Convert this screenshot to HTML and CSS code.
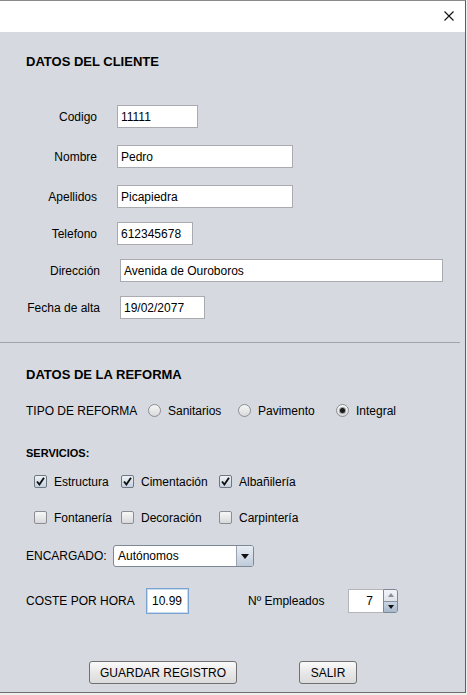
FILE: index.html
```html
<!DOCTYPE html>
<html lang="es">
<head>
<meta charset="utf-8">
<title>Datos del cliente</title>
<link rel="stylesheet" href="styles.css">
</head>
<body>
<div class="window">
  <div class="titlebar">
    <svg class="close" width="10" height="10" viewBox="0 0 10 10"><path d="M0.5 0.5 L9.5 9.5 M9.5 0.5 L0.5 9.5" stroke="#111" stroke-width="1.1" fill="none"/></svg>
  </div>
  <div class="panel">
    <section class="client">
      <h2 class="heading">DATOS DEL CLIENTE</h2>
      <div class="form">
        <div class="row"><span class="lbl">Codigo</span><span class="field w-codigo">11111</span></div>
        <div class="row gap17"><span class="lbl">Nombre</span><span class="field w-nombre">Pedro</span></div>
        <div class="row gap17"><span class="lbl">Apellidos</span><span class="field w-nombre">Picapiedra</span></div>
        <div class="row gap14"><span class="lbl">Telefono</span><span class="field w-tel">612345678</span></div>
        <div class="row gap14"><span class="lbl lbl-wide">Dirección</span><span class="field w-dir">Avenida de Ouroboros</span></div>
        <div class="row gap14"><span class="lbl lbl-wide">Fecha de alta</span><span class="field w-fecha">19/02/2077</span></div>
      </div>
    </section>
    <hr class="sep">
    <section class="reforma">
      <h2 class="heading heading-2">DATOS DE LA REFORMA</h2>
      <div class="tipo">
        <span class="tipo-lbl">TIPO DE REFORMA</span>
        <span class="opt opt-1"><span class="radio"></span>Sanitarios</span>
        <span class="opt opt-2"><span class="radio"></span>Pavimento</span>
        <span class="opt"><span class="radio on"></span>Integral</span>
      </div>
      <h3 class="sub">SERVICIOS:</h3>
      <div class="checks">
        <span class="chk"><span class="box on"><svg width="11" height="11" viewBox="0 0 11 11"><path d="M2 5.5 L4.4 8.5 L9 1.8" stroke="#111" stroke-width="1.9" fill="none"/></svg></span>Estructura</span>
        <span class="chk"><span class="box on"><svg width="11" height="11" viewBox="0 0 11 11"><path d="M2 5.5 L4.4 8.5 L9 1.8" stroke="#111" stroke-width="1.9" fill="none"/></svg></span>Cimentación</span>
        <span class="chk"><span class="box on"><svg width="11" height="11" viewBox="0 0 11 11"><path d="M2 5.5 L4.4 8.5 L9 1.8" stroke="#111" stroke-width="1.9" fill="none"/></svg></span>Albañilería</span>
        <span class="chk"><span class="box"></span>Fontanería</span>
        <span class="chk"><span class="box"></span>Decoración</span>
        <span class="chk"><span class="box"></span>Carpintería</span>
      </div>
      <div class="encargado">
        <span class="enc-lbl">ENCARGADO:</span>
        <span class="combo"><span class="combo-text">Autónomos</span><span class="combo-btn"><svg width="8" height="5" viewBox="0 0 8 5"><path d="M0 0 H8 L4 5 Z" fill="#111"/></svg></span></span>
      </div>
      <div class="coste">
        <span class="coste-lbl">COSTE POR HORA</span>
        <span class="field focus">10.99</span>
        <span class="emp-lbl">Nº Empleados</span>
        <span class="spinner">
          <span class="spin-text">7</span>
          <span class="spin-btns">
            <span class="spin-up"><svg width="6" height="4" viewBox="0 0 6 4"><path d="M0 4 L3 0 L6 4 Z" fill="#8a8f96"/></svg></span>
            <span class="spin-down"><svg width="6" height="4" viewBox="0 0 6 4"><path d="M0 0 H6 L3 4 Z" fill="#111"/></svg></span>
          </span>
        </span>
      </div>
      <div class="actions">
        <button class="btn btn-save">GUARDAR REGISTRO</button>
        <button class="btn btn-exit">SALIR</button>
      </div>
    </section>
  </div>
</div>
</body>
</html>
```
FILE: styles.css
```css
* { box-sizing: border-box; }
html, body { margin: 0; padding: 0; }
body {
  background: #f0f0f0;
  font-family: "Liberation Sans", Arial, sans-serif;
  font-size: 12px;
  color: #000;
}
.window {
  width: 466px;
  border-top: 1px solid #8a8a8a;
  border-right: 1px solid #5e5e5e;
  border-bottom: 1px solid #6e6e6e;
  background: #d6d9df;
}
.titlebar {
  height: 31px;
  background: #fff;
  display: flex;
  justify-content: flex-end;
  align-items: flex-start;
  padding: 10px 11px 0 0;
}
.close { display: block; }
.panel {
  padding-bottom: 8px;
}
.client { padding-left: 26px; }
.heading {
  margin: 22px 0 0;
  font-size: 13px;
  line-height: 15px;
  font-weight: bold;
}
.heading-2 { margin-top: 24px; }
.form { margin-top: 36px; }
.row {
  display: flex;
  align-items: center;
  height: 23px;
}
.gap17 { margin-top: 17px; }
.gap14 { margin-top: 14px; }
.lbl {
  width: 71px;
  margin-right: 20px;
  text-align: right;
  line-height: 14px;
}
.lbl-wide { width: 74px; }
.field {
  display: flex;
  align-items: center;
  height: 23px;
  background: #fff;
  border: 1px solid #a9abb0;
  padding-left: 3px;
  line-height: 14px;
  white-space: nowrap;
}
.w-codigo { width: 81px; }
.w-nombre { width: 176px; }
.w-tel { width: 76px; }
.w-dir { width: 323px; }
.w-fecha { width: 85px; }
.sep {
  margin: 23px 0 0;
  width: 460px;
  height: 0;
  border: 0;
  border-top: 1px solid #a2a4a8;
}
.reforma { padding-left: 26px; }
.tipo {
  margin-top: 21px;
  display: flex;
  align-items: center;
  height: 15px;
}
.tipo-lbl { width: 122px; }
.opt {
  display: flex;
  align-items: center;
  gap: 7px;
}
.opt-1 { width: 90px; }
.opt-2 { width: 98px; }
.radio {
  width: 13px;
  height: 13px;
  border-radius: 50%;
  border: 1px solid #8c8e92;
  background: linear-gradient(#f6f6f6, #d9dadc);
  display: flex;
  align-items: center;
  justify-content: center;
}
.radio.on::after {
  content: "";
  width: 5px;
  height: 5px;
  border-radius: 50%;
  background: #1a1a1a;
  box-shadow: 0 0 0 1px #9a9da2;
}
.sub {
  margin: 29px 0 0;
  font-size: 11px;
  line-height: 13px;
  font-weight: bold;
}
.checks {
  margin: 14px 0 0 8px;
  display: grid;
  grid-template-columns: 87px 98px auto;
  row-gap: 21px;
}
.chk {
  display: flex;
  align-items: center;
  gap: 7px;
  height: 15px;
}
.box {
  width: 13px;
  height: 13px;
  border: 1px solid #8b8d91;
  border-radius: 2px;
  background: linear-gradient(#f7f7f7, #d8d9db);
  display: flex;
  align-items: center;
  justify-content: center;
}
.box.on { background: linear-gradient(#eef2f7, #c6d2e0); border-color: #6f7782; }
.box svg { display: block; }
.encargado {
  margin-top: 20px;
  display: flex;
  align-items: center;
  height: 22px;
}
.enc-lbl { width: 87px; }
.combo {
  width: 141px;
  height: 22px;
  display: flex;
  border: 1px solid #7e8794;
  border-radius: 3px;
  background: #fff;
  overflow: hidden;
}
.combo-text {
  flex: 1;
  display: flex;
  align-items: center;
  padding-left: 4px;
}
.combo-btn {
  width: 17px;
  border-left: 1px solid #9aa3af;
  background: linear-gradient(#e9eef4, #bfcbda);
  display: flex;
  align-items: center;
  justify-content: center;
}
.combo-btn svg { display: block; }
.coste {
  margin-top: 21px;
  display: flex;
  align-items: center;
  height: 26px;
}
.coste-lbl { width: 120px; }
.field.focus {
  width: 43px;
  height: 26px;
  padding-left: 5px;
  border: 1px solid #7aa3cf;
  box-shadow: inset 0 0 0 1px #c7daee;
}
.emp-lbl { margin-left: 59px; width: 100px; }
.spinner {
  width: 50px;
  height: 24px;
  display: flex;
}
.spin-text {
  width: 35px;
  background: #fff;
  border: 1px solid #b2b4b8;
  border-right: 0;
  display: flex;
  align-items: center;
  justify-content: flex-end;
  padding-right: 10px;
}
.spin-btns {
  width: 15px;
  display: flex;
  flex-direction: column;
  border: 1px solid #7d8896;
  border-radius: 0 3px 3px 0;
  overflow: hidden;
}
.spin-up, .spin-down {
  flex: 1;
  display: flex;
  align-items: center;
  justify-content: center;
}
.spin-up { background: linear-gradient(#f2f4f7, #dde3ea); border-bottom: 1px solid #8a94a1; }
.spin-down { background: linear-gradient(#c9d5e3, #a9b9cc); }
.spin-up svg, .spin-down svg { display: block; }
.actions {
  margin: 47px 0 0 63px;
  display: flex;
  align-items: center;
}
.btn {
  height: 23px;
  padding: 0;
  font-family: "Liberation Sans", Arial, sans-serif;
  font-size: 12px;
  color: #000;
  border: 1px solid #707070;
  border-radius: 3px;
  background: linear-gradient(#fbfbfb, #e6e6e6 55%, #dcdcdc);
}
.btn-save { width: 148px; }
.btn-exit { width: 58px; margin-left: 62px; }
```
